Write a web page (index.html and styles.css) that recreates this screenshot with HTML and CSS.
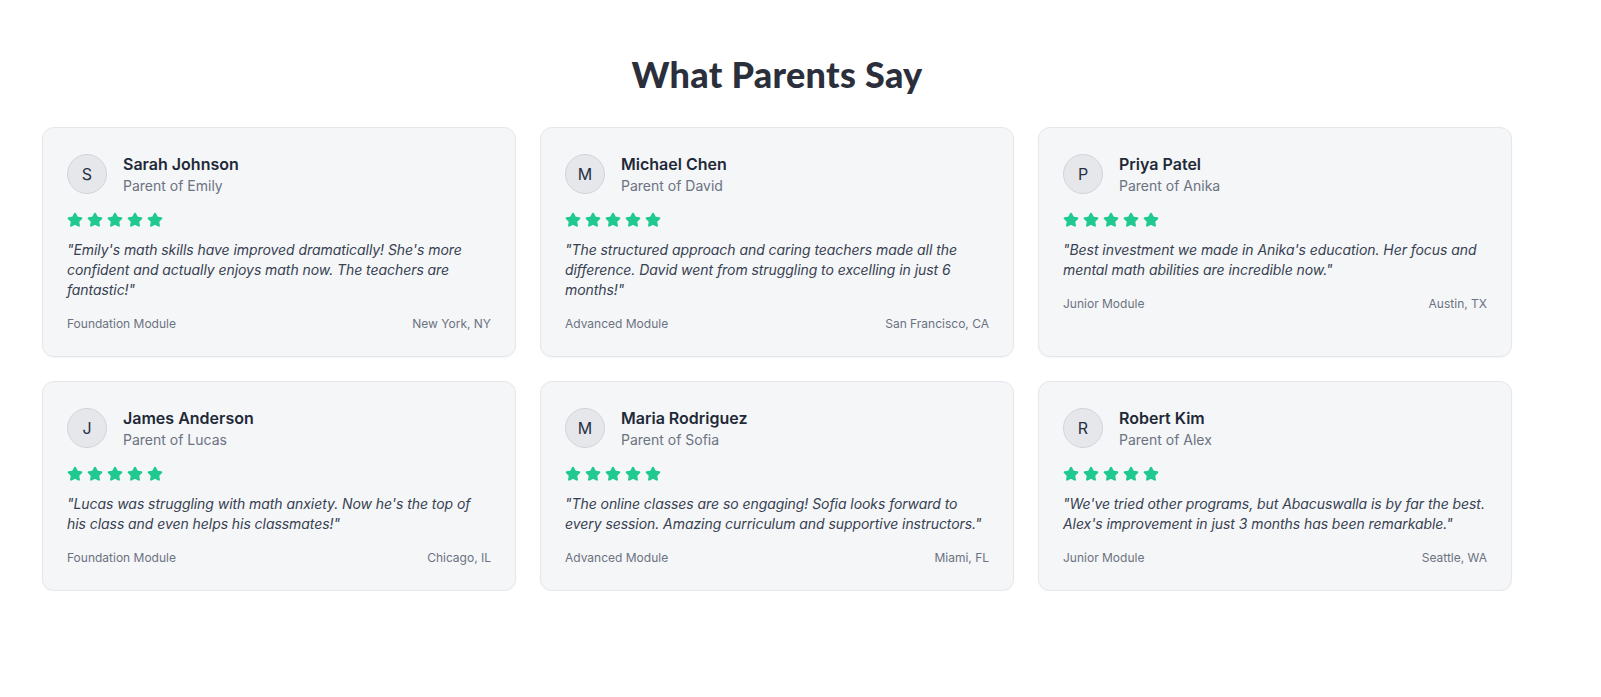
FILE: index.html
```html
<!DOCTYPE html>
<html lang="en">
<head>
<meta charset="utf-8">
<title>What Parents Say</title>
<link rel="stylesheet" href="styles.css">
</head>
<body>
<svg class="defs" width="0" height="0" aria-hidden="true">
  <symbol id="star" viewBox="0 0 24 24">
    <path d="M11.525 2.295a.53.53 0 0 1 .95 0l2.31 4.679a2.123 2.123 0 0 0 1.595 1.16l5.166.756a.53.53 0 0 1 .294.904l-3.736 3.638a2.123 2.123 0 0 0-.611 1.878l.882 5.14a.53.53 0 0 1-.771.56l-4.618-2.428a2.122 2.122 0 0 0-1.973 0L6.396 21.010a.53.53 0 0 1-.77-.56l.881-5.139a2.122 2.122 0 0 0-.611-1.879L2.16 9.795a.53.53 0 0 1 .294-.906l5.165-.755a2.122 2.122 0 0 0 1.597-1.16z"/>
  </symbol>
</svg>
<section class="testimonials">
  <h2 class="title">What Parents Say</h2>
  <div class="grid">
    <article class="card">
      <div class="head"><div class="avatar">S</div><div><div class="name">Sarah Johnson</div><div class="sub">Parent of Emily</div></div></div>
      <div class="stars"><svg><use href="#star"/></svg><svg><use href="#star"/></svg><svg><use href="#star"/></svg><svg><use href="#star"/></svg><svg><use href="#star"/></svg></div>
      <p class="quote">"Emily's math skills have improved dramatically! She's more confident and actually enjoys math now. The teachers are fantastic!"</p>
      <div class="foot"><span>Foundation Module</span><span>New York, NY</span></div>
    </article>
    <article class="card">
      <div class="head"><div class="avatar">M</div><div><div class="name">Michael Chen</div><div class="sub">Parent of David</div></div></div>
      <div class="stars"><svg><use href="#star"/></svg><svg><use href="#star"/></svg><svg><use href="#star"/></svg><svg><use href="#star"/></svg><svg><use href="#star"/></svg></div>
      <p class="quote">"The structured approach and caring teachers made all the difference. David went from struggling to excelling in just 6 months!"</p>
      <div class="foot"><span>Advanced Module</span><span>San Francisco, CA</span></div>
    </article>
    <article class="card">
      <div class="head"><div class="avatar">P</div><div><div class="name">Priya Patel</div><div class="sub">Parent of Anika</div></div></div>
      <div class="stars"><svg><use href="#star"/></svg><svg><use href="#star"/></svg><svg><use href="#star"/></svg><svg><use href="#star"/></svg><svg><use href="#star"/></svg></div>
      <p class="quote">"Best investment we made in Anika's education. Her focus and mental math abilities are incredible now."</p>
      <div class="foot"><span>Junior Module</span><span>Austin, TX</span></div>
    </article>
    <article class="card">
      <div class="head"><div class="avatar">J</div><div><div class="name">James Anderson</div><div class="sub">Parent of Lucas</div></div></div>
      <div class="stars"><svg><use href="#star"/></svg><svg><use href="#star"/></svg><svg><use href="#star"/></svg><svg><use href="#star"/></svg><svg><use href="#star"/></svg></div>
      <p class="quote">"Lucas was struggling with math anxiety. Now he's the top of his class and even helps his classmates!"</p>
      <div class="foot"><span>Foundation Module</span><span>Chicago, IL</span></div>
    </article>
    <article class="card">
      <div class="head"><div class="avatar">M</div><div><div class="name">Maria Rodriguez</div><div class="sub">Parent of Sofia</div></div></div>
      <div class="stars"><svg><use href="#star"/></svg><svg><use href="#star"/></svg><svg><use href="#star"/></svg><svg><use href="#star"/></svg><svg><use href="#star"/></svg></div>
      <p class="quote">"The online classes are so engaging! Sofia looks forward to every session. Amazing curriculum and supportive instructors."</p>
      <div class="foot"><span>Advanced Module</span><span>Miami, FL</span></div>
    </article>
    <article class="card">
      <div class="head"><div class="avatar">R</div><div><div class="name">Robert Kim</div><div class="sub">Parent of Alex</div></div></div>
      <div class="stars"><svg><use href="#star"/></svg><svg><use href="#star"/></svg><svg><use href="#star"/></svg><svg><use href="#star"/></svg><svg><use href="#star"/></svg></div>
      <p class="quote">"We've tried other programs, but Abacuswalla is by far the best. Alex's improvement in just 3 months has been remarkable."</p>
      <div class="foot"><span>Junior Module</span><span>Seattle, WA</span></div>
    </article>
  </div>
</section>
</body>
</html>
```
FILE: styles.css
```css
* { box-sizing: border-box; }
html, body { margin: 0; padding: 0; background: #ffffff; }
body { font-family: Inter, "Liberation Sans", sans-serif; color: #1f2937; }
.defs { position: absolute; width: 0; height: 0; overflow: hidden; }

.testimonials {
  width: 1470px;
  margin-left: 42px;
  padding-top: 54px;
}
.title {
  margin: 0 0 33px;
  text-align: center;
  font-family: Lato, "Open Sans", sans-serif;
  font-weight: 900;
  font-size: 36px;
  line-height: 40px;
  color: #2b2f3b;
  letter-spacing: 0.3px;
}
.grid {
  display: grid;
  grid-template-columns: repeat(3, 1fr);
  gap: 24px;
}
.card {
  background: #f5f6f8;
  border: 1px solid #e5e7eb;
  border-radius: 12px;
  padding: 24px;
  box-shadow: 0 1px 2px rgba(0,0,0,0.04);
}
.head { display: flex; align-items: center; gap: 16px; }
.avatar {
  width: 40px; height: 40px;
  border-radius: 50%;
  background: #e5e7eb;
  border: 1px solid #d1d5db;
  display: flex; align-items: center; justify-content: center;
  font-size: 16px;
  color: #283044;
  flex: none;
}
.name { font-size: 16px; line-height: 24px; font-weight: 600; color: #1f2937; }
.sub { font-size: 14px; line-height: 20px; color: #6b7280; }
.stars { display: flex; gap: 4px; margin-top: 16px; height: 16px; }
.stars svg { width: 16px; height: 16px; fill: #20c98f; stroke: #20c98f; stroke-width: 2; stroke-linejoin: round; }
.quote {
  margin: 12px 0 16px;
  font-size: 14px;
  line-height: 20px;
  font-style: italic;
  letter-spacing: -0.06px;
  color: #374151;
}
.foot {
  display: flex; justify-content: space-between;
  font-size: 12px; line-height: 16px; color: #6b7280;
}
```
